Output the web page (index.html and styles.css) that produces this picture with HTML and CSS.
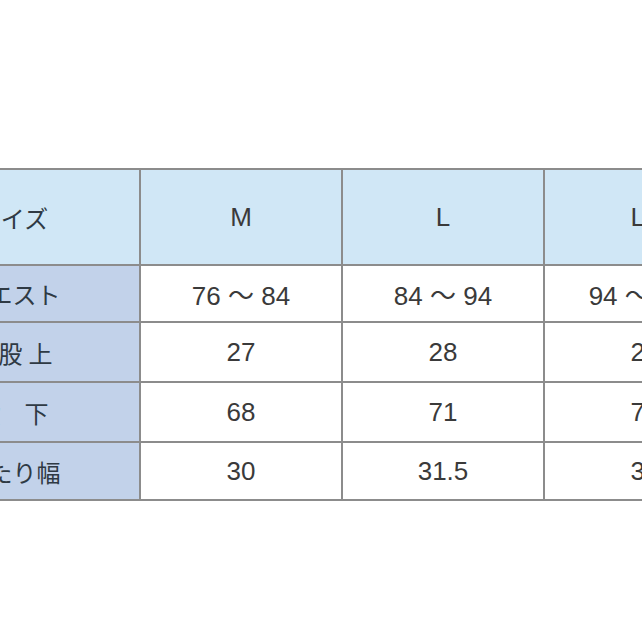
FILE: index.html
```html
<!DOCTYPE html>
<html lang="ja">
<head>
<meta charset="utf-8">
<link rel="stylesheet" href="styles.css">
</head>
<body>
<div class="page">
  <table class="size-table">
    <colgroup>
      <col class="c-label">
      <col class="c-size">
      <col class="c-size">
      <col class="c-size">
    </colgroup>
    <tr class="head">
      <th class="label">サイズ</th>
      <th>M</th>
      <th>L</th>
      <th>LL</th>
    </tr>
    <tr class="r1">
      <th class="label">ウエスト</th>
      <td>76 ～ 84</td>
      <td>84 ～ 94</td>
      <td>94 ～ 104</td>
    </tr>
    <tr class="r2">
      <th class="label shift">股上</th>
      <td>27</td>
      <td>28</td>
      <td>29</td>
    </tr>
    <tr class="r3">
      <th class="label">股　下</th>
      <td>68</td>
      <td>71</td>
      <td>74</td>
    </tr>
    <tr class="r4">
      <th class="label">わたり幅</th>
      <td>30</td>
      <td>31.5</td>
      <td>33</td>
    </tr>
  </table>
</div>
</body>
</html>
```

FILE: styles.css
```css
html, body {
  margin: 0;
  padding: 0;
  background: #ffffff;
  overflow: hidden;
  width: 642px;
  height: 642px;
}

.page {
  padding-top: 168px;
  width: 642px;
  overflow: hidden;
}

.size-table {
  margin-left: -116px;
  border-collapse: collapse;
  table-layout: fixed;
  width: 860px;
  font-family: "Liberation Sans", "Noto Sans CJK JP", sans-serif;
  font-size: 26px;
  color: #3a3a3a;
}

.c-label { width: 255px; }
.c-size { width: 202px; }

.size-table th,
.size-table td {
  border: 2px solid #8c8c8c;
  text-align: center;
  font-weight: normal;
  padding: 0;
}

.size-table .label {
  background: #c2d2ea;
  font-family: "Noto Sans CJK JP", sans-serif;
  font-size: 24px;
  color: #2f3a44;
}

.size-table .shift {
  letter-spacing: 6px;
  padding-left: 32px;
}

.head th {
  background: #d0e7f6;
  height: 94px;
}

.head th.label {
  background: #d0e7f6;
}

.r1 td, .r1 th { height: 55px; }
.r2 td, .r2 th { height: 58px; }
.r3 td, .r3 th { height: 58px; }
.r4 td, .r4 th { height: 56px; }
```
